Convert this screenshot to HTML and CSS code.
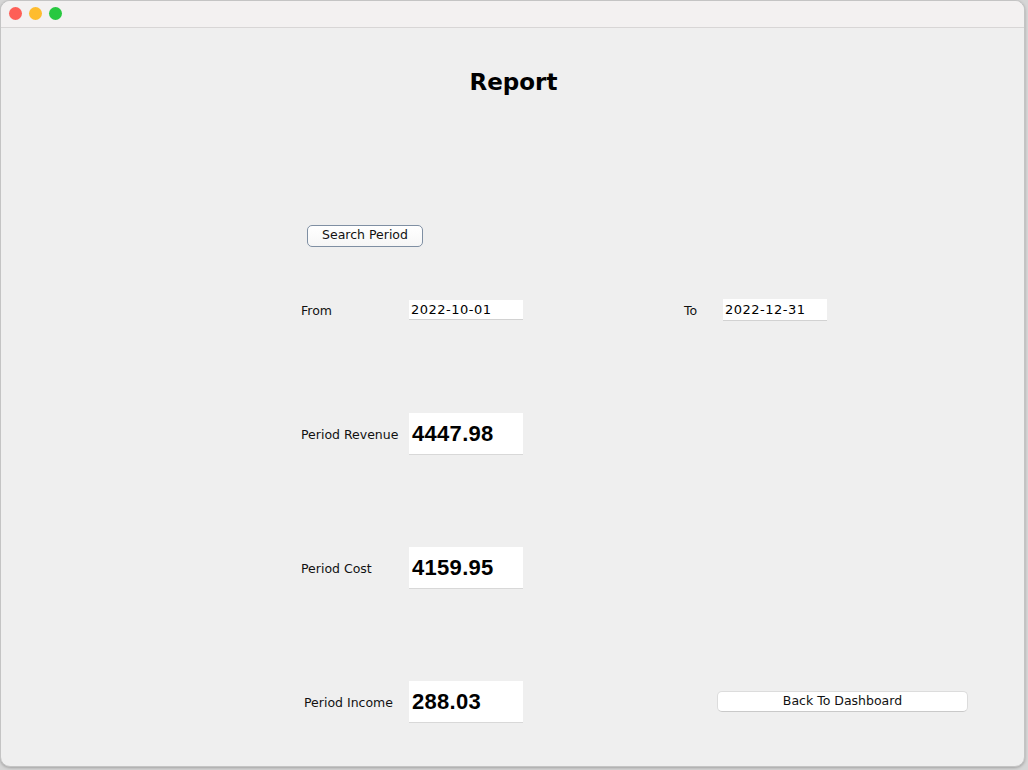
FILE: index.html
```html
<!DOCTYPE html>
<html lang="en">
<head>
<meta charset="utf-8">
<title>Report</title>
<link rel="stylesheet" href="styles.css">
</head>
<body>
<div class="window">
  <div class="titlebar">
    <span class="light red"></span>
    <span class="light yellow"></span>
    <span class="light green"></span>
  </div>
  <div class="content">
    <h1 class="title">Report</h1>
    <div class="form">
      <div class="row row-search">
        <button class="btn btn-search">Search Period</button>
      </div>
      <div class="row row-dates">
        <span class="label">From</span>
        <span class="field field-from">2022-10-01</span>
        <span class="label label-to">To</span>
        <span class="field field-to">2022-12-31</span>
      </div>
      <div class="row row-value">
        <span class="label">Period Revenue</span>
        <span class="value">4447.98</span>
      </div>
      <div class="row row-value">
        <span class="label">Period Cost</span>
        <span class="value">4159.95</span>
      </div>
      <div class="row row-value">
        <span class="label label-income">Period Income</span>
        <span class="value">288.03</span>
        <button class="btn btn-back">Back To Dashboard</button>
      </div>
    </div>
  </div>
</div>
</body>
</html>
```

FILE: styles.css
```css
* { box-sizing: border-box; }
html, body { margin: 0; padding: 0; }
body {
  background: #d6d6d6;
  width: 1028px;
  height: 770px;
  overflow: hidden;
  font-family: "DejaVu Sans", "Liberation Sans", sans-serif;
  color: #111;
}
.window {
  width: 1025px;
  height: 767px;
  background: #efefef;
  border: 1px solid #c4c4c4;
  border-radius: 10px;
  overflow: hidden;
  display: flex;
  flex-direction: column;
  box-shadow: 0 1px 3px rgba(0,0,0,0.25);
}
.titlebar {
  height: 27px;
  flex: none;
  background: #f3f1f1;
  border-bottom: 1px solid #d8d6d6;
  display: flex;
  align-items: center;
  padding-left: 8px;
  gap: 7px;
  padding-bottom: 2px;
}
.light {
  width: 13px;
  height: 13px;
  border-radius: 50%;
  display: block;
}
.red { background: #fe5f57; }
.yellow { background: #febc2e; }
.green { background: #28c840; }
.content {
  flex: 1;
  display: flex;
  flex-direction: column;
}
.title {
  margin: 40px 0 0 0;
  height: 28px;
  line-height: 28px;
  text-align: center;
  font-size: 23px;
  font-weight: bold;
  color: #000;
  padding-left: 2px;
}
.form {
  padding-left: 300px;
  display: flex;
  flex-direction: column;
}
.row {
  display: flex;
  align-items: center;
}
.row-search { margin-top: 129px; height: 22px; }
.row-dates { margin-top: 52px; height: 22px; }
.row-value { margin-top: 92px; height: 42px; }
.label {
  width: 108px;
  font-size: 12.5px;
  color: #111;
}
.label-income { padding-left: 3px; }
.label-to { width: 39px; margin-left: 161px; }
.btn {
  font-family: "DejaVu Sans", "Liberation Sans", sans-serif;
  font-size: 12.5px;
  color: #111;
  padding: 0;
  cursor: default;
  line-height: 1;
}
.btn-search {
  margin-left: 6px;
  width: 116px;
  height: 22px;
  border: 1.5px solid #7f8fa3;
  border-radius: 5px;
  background: linear-gradient(#ffffff, #f6f6f6);
  padding-bottom: 1px;
}
.btn-back {
  margin-left: 194px;
  width: 251px;
  height: 21px;
  border: 1px solid #dcdcdc;
  border-bottom-color: #c9c9c9;
  border-radius: 5px;
  background: #ffffff;
  margin-top: -1px;
}
.field {
  background: #ffffff;
  border-bottom: 1px solid #d2d2d2;
  font-size: 13px;
  letter-spacing: 0.5px;
  color: #000;
  display: flex;
  align-items: center;
  padding-left: 2px;
}
.field-from { width: 114px; height: 20px; }
.field-to { width: 104px; height: 22px; }
.value {
  width: 114px;
  height: 42px;
  background: #ffffff;
  border-bottom: 1px solid #d8d8d8;
  font-family: "Liberation Sans", "DejaVu Sans", sans-serif;
  font-weight: bold;
  font-size: 22px;
  letter-spacing: 0.3px;
  color: #000;
  display: flex;
  align-items: center;
  padding-left: 3px;
}
```
